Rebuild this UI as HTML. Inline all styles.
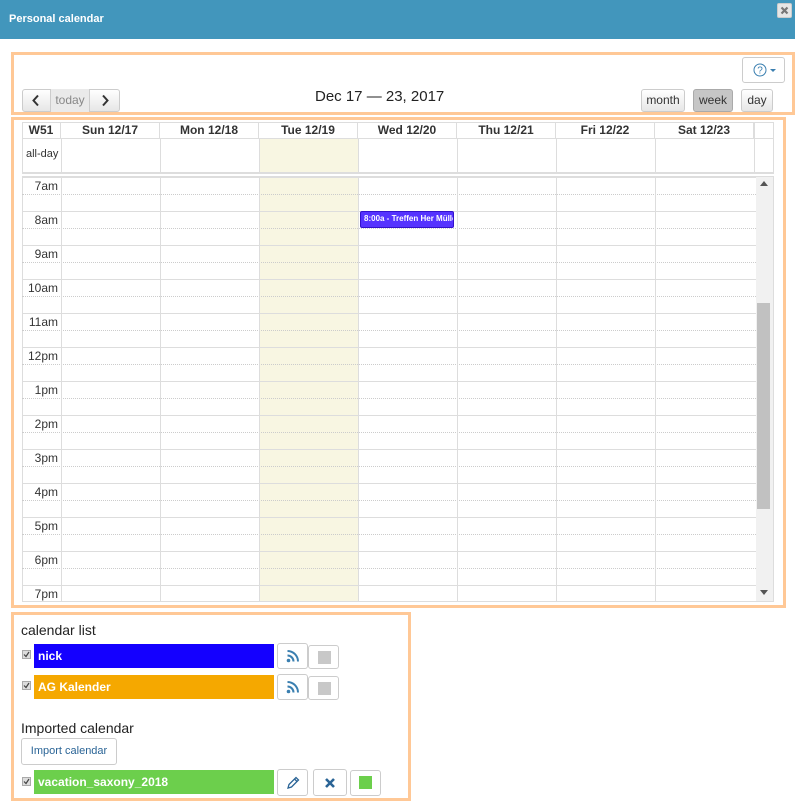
<!DOCTYPE html>
<html><head><meta charset="utf-8"><style>
*{box-sizing:border-box;margin:0;padding:0}
body{width:795px;height:804px;background:#fff;font-family:"Liberation Sans",Arial,sans-serif;position:relative;overflow:hidden;color:#333}
.a{position:absolute}
.hdr{left:0;top:0;width:795px;height:39px;background:#4296bc;color:#fff;font-weight:bold;font-size:11px;padding:13px 9px}
.close{left:777px;top:3px;width:15px;height:15px;background:#e6e6e6;border:1px solid #ccc;border-radius:2px}
.ob{border:3px solid #ffc896}
.btn{position:absolute;border:1px solid #ccc;border-radius:3px;background:linear-gradient(#fff,#e6e6e6);font-size:12px;color:#333;text-align:center}
.th{position:absolute;top:122px;height:17px;font-weight:bold;font-size:12px;text-align:center;line-height:17px;border-right:1px solid #ddd}
.vl{position:absolute;width:1px;background:#ddd}
.row{position:absolute;left:22px;width:734px;height:34px;border-top:1px solid #ddd}
.row .h{position:absolute;left:0;top:16px;width:734px;border-top:1px dotted #ccc}
.row span{position:absolute;left:0;width:36px;text-align:right;top:1px;font-size:12px;color:#333}
.bar{position:absolute;left:34px;width:240px;height:24px;color:#fff;font-weight:bold;font-size:12px;line-height:24px;padding-left:4px}
.ib{position:absolute;width:31px;height:24px;border:1px solid #ccc;border-radius:3px;background:#fff}
.ib svg{position:absolute;left:50%;top:50%;transform:translate(-50%,-50%)}
.cb{position:absolute;left:22px;width:9px;height:9px;background:#ddd;border:1px solid #aaa}
.cb svg{position:absolute;left:0;top:0}
</style></head><body>
<div class="a hdr">Personal calendar</div>
<div class="a close"><svg width="13" height="13" viewBox="0 0 13 13"><path d="M3.5 3.5L9.5 9.5M9.5 3.5L3.5 9.5" stroke="#777" stroke-width="2.2"/></svg></div>

<div class="a ob" style="left:11px;top:52px;width:784px;height:63px"></div>
<div class="btn" style="left:742px;top:57px;width:43px;height:26px;background:#fff">
<svg class="a" style="left:10px;top:5px" width="24" height="14" viewBox="0 0 24 14"><circle cx="7" cy="7" r="6" fill="none" stroke="#3a7fb0" stroke-width="1"/><text x="7" y="10.5" font-size="10" text-anchor="middle" fill="#3a7fb0" font-family="Liberation Sans">?</text><path d="M17 6h6l-3 3z" fill="#3a7fb0"/></svg></div>
<div class="btn" style="left:22px;top:89px;width:98px;height:23px"></div>
<svg class="a" style="left:31px;top:94px" width="10" height="13" viewBox="0 0 10 13"><path d="M7 1.5L2.5 6.5L7 11.5" fill="none" stroke="#333" stroke-width="2"/></svg>
<div class="a" style="left:50px;top:89px;width:40px;height:23px;border-left:1px solid #ccc;border-right:1px solid #ccc;background:#eaeaea;color:#888;font-size:12px;text-align:center;line-height:22px">today</div>
<svg class="a" style="left:100px;top:94px" width="10" height="13" viewBox="0 0 10 13"><path d="M3 1.5L7.5 6.5L3 11.5" fill="none" stroke="#333" stroke-width="2"/></svg>
<div class="a" style="left:315px;top:88px;font-size:15px;color:#222">Dec 17 — 23, 2017</div>
<div class="btn" style="left:641px;top:89px;width:44px;height:23px;line-height:21px">month</div>
<div class="btn" style="left:693px;top:89px;width:40px;height:23px;line-height:21px;background:#c6c6c6;border-color:#aaa">week</div>
<div class="btn" style="left:741px;top:89px;width:32px;height:23px;line-height:21px">day</div>

<div class="a ob" style="left:11px;top:117px;width:775px;height:491px"></div>
<div class="a" style="left:22px;top:122px;width:752px;height:480px;border:1px solid #ddd"></div>
<div class="a" style="left:259px;top:138px;width:100px;height:35px;background:#f8f6e2"></div>
<div class="a" style="left:259px;top:177px;width:100px;height:424px;background:#f8f6e2"></div>
<div class="th" style="left:22px;width:39px">W51</div>
<div class="th" style="left:61px;width:99px">Sun 12/17</div>
<div class="th" style="left:160px;width:99px">Mon 12/18</div>
<div class="th" style="left:259px;width:99px">Tue 12/19</div>
<div class="th" style="left:358px;width:99px">Wed 12/20</div>
<div class="th" style="left:457px;width:99px">Thu 12/21</div>
<div class="th" style="left:556px;width:99px">Fri 12/22</div>
<div class="th" style="left:655px;width:99px">Sat 12/23</div>
<div class="a" style="left:22px;top:138px;width:752px;border-top:1px solid #ddd"></div>
<div class="a" style="left:26px;top:148px;font-size:11px">all-day</div>
<div class="a" style="left:22px;top:172px;width:752px;height:5px;border-top:2px solid #ddd;border-bottom:1px solid #ddd;background:#fff"></div>
<div class="vl" style="left:61px;top:138px;height:34px"></div>
<div class="vl" style="left:160px;top:138px;height:34px"></div>
<div class="vl" style="left:259px;top:138px;height:34px"></div>
<div class="vl" style="left:358px;top:138px;height:34px"></div>
<div class="vl" style="left:457px;top:138px;height:34px"></div>
<div class="vl" style="left:556px;top:138px;height:34px"></div>
<div class="vl" style="left:655px;top:138px;height:34px"></div>
<div class="vl" style="left:754px;top:122px;height:50px"></div>

<div class="row" style="top:177px"><div class="h"></div><span>7am</span></div>
<div class="row" style="top:211px"><div class="h"></div><span>8am</span></div>
<div class="row" style="top:245px"><div class="h"></div><span>9am</span></div>
<div class="row" style="top:279px"><div class="h"></div><span>10am</span></div>
<div class="row" style="top:313px"><div class="h"></div><span>11am</span></div>
<div class="row" style="top:347px"><div class="h"></div><span>12pm</span></div>
<div class="row" style="top:381px"><div class="h"></div><span>1pm</span></div>
<div class="row" style="top:415px"><div class="h"></div><span>2pm</span></div>
<div class="row" style="top:449px"><div class="h"></div><span>3pm</span></div>
<div class="row" style="top:483px"><div class="h"></div><span>4pm</span></div>
<div class="row" style="top:517px"><div class="h"></div><span>5pm</span></div>
<div class="row" style="top:551px"><div class="h"></div><span>6pm</span></div>
<div class="row" style="top:585px;height:16px"><span>7pm</span></div>
<div class="vl" style="left:61px;top:177px;height:424px"></div>
<div class="vl" style="left:160px;top:177px;height:424px"></div>
<div class="vl" style="left:259px;top:177px;height:424px"></div>
<div class="vl" style="left:358px;top:177px;height:424px"></div>
<div class="vl" style="left:457px;top:177px;height:424px"></div>
<div class="vl" style="left:556px;top:177px;height:424px"></div>
<div class="vl" style="left:655px;top:177px;height:424px"></div>
<div class="a" style="left:756px;top:177px;width:17px;height:424px;background:#f1f1f1"></div>
<div class="a" style="left:757px;top:303px;width:13px;height:206px;background:#c1c1c1"></div>
<svg class="a" style="left:760px;top:181px" width="8" height="6"><path d="M0 5h8L4 0z" fill="#555"/></svg>
<svg class="a" style="left:760px;top:590px" width="8" height="6"><path d="M0 0h8L4 5z" fill="#555"/></svg>
<div class="a" style="left:360px;top:211px;width:94px;height:17px;background:#5533ff;border:1px solid #3311cc;border-radius:2px;color:#fff;font-size:8px;font-weight:bold;line-height:14px;padding-left:3px;white-space:nowrap;overflow:hidden">8:00a - Treffen Her Müller</div>

<div class="a ob" style="left:11px;top:612px;width:400px;height:189px"></div>
<div class="a" style="left:21px;top:622px;font-size:14px;color:#222">calendar list</div>
<div class="cb" style="top:650px"><svg width="7" height="7"><path d="M1 3.5L3 5.5L6 1" fill="none" stroke="#444" stroke-width="1.2"/></svg></div>
<div class="bar" style="top:644px;background:#1400ff">nick</div>
<div class="ib" style="left:277px;top:643px;height:26px"><svg width="13" height="13" viewBox="0 0 13 13"><circle cx="2" cy="11" r="1.8" fill="#3a7fb0"/><path d="M1 6a6 6 0 0 1 6 6M1 1.5a10.5 10.5 0 0 1 10.5 10.5" fill="none" stroke="#3a7fb0" stroke-width="2"/></svg></div>
<div class="ib" style="left:308px;top:645px"><div class="a" style="left:9px;top:5px;width:13px;height:13px;background:#c8c8c8"></div></div>
<div class="cb" style="top:681px"><svg width="7" height="7"><path d="M1 3.5L3 5.5L6 1" fill="none" stroke="#444" stroke-width="1.2"/></svg></div>
<div class="bar" style="top:675px;background:#f5a800">AG Kalender</div>
<div class="ib" style="left:277px;top:674px;height:26px"><svg width="13" height="13" viewBox="0 0 13 13"><circle cx="2" cy="11" r="1.8" fill="#3a7fb0"/><path d="M1 6a6 6 0 0 1 6 6M1 1.5a10.5 10.5 0 0 1 10.5 10.5" fill="none" stroke="#3a7fb0" stroke-width="2"/></svg></div>
<div class="ib" style="left:308px;top:676px"><div class="a" style="left:9px;top:5px;width:13px;height:13px;background:#c8c8c8"></div></div>
<div class="a" style="left:21px;top:720px;font-size:14px;color:#222">Imported calendar</div>
<div class="a" style="left:21px;top:738px;width:96px;height:27px;border:1px solid #ccc;border-radius:3px;font-size:11px;color:#2a6496;line-height:25px;text-align:center">Import calendar</div>
<div class="cb" style="top:777px"><svg width="7" height="7"><path d="M1 3.5L3 5.5L6 1" fill="none" stroke="#444" stroke-width="1.2"/></svg></div>
<div class="bar" style="top:770px;background:#6ccf4c">vacation_saxony_2018</div>
<div class="ib" style="left:277px;top:769px;height:27px"><svg width="14" height="14" viewBox="0 0 14 14"><path d="M2 12l1-3.5L10 1.5l2.5 2.5L5.5 11z" fill="none" stroke="#2a6496" stroke-width="1.3"/><path d="M8.5 3l2.5 2.5" stroke="#2a6496" stroke-width="1.3"/></svg></div>
<div class="ib" style="left:313px;top:769px;height:27px;width:34px"><svg width="11" height="11" viewBox="0 0 11 11"><path d="M1.5 1.5L9.5 9.5M9.5 1.5L1.5 9.5" stroke="#2a6496" stroke-width="2.6"/></svg></div>
<div class="ib" style="left:350px;top:770px;height:26px"><div class="a" style="left:8px;top:5px;width:13px;height:13px;background:#6ccf4c"></div></div>
</body></html>
